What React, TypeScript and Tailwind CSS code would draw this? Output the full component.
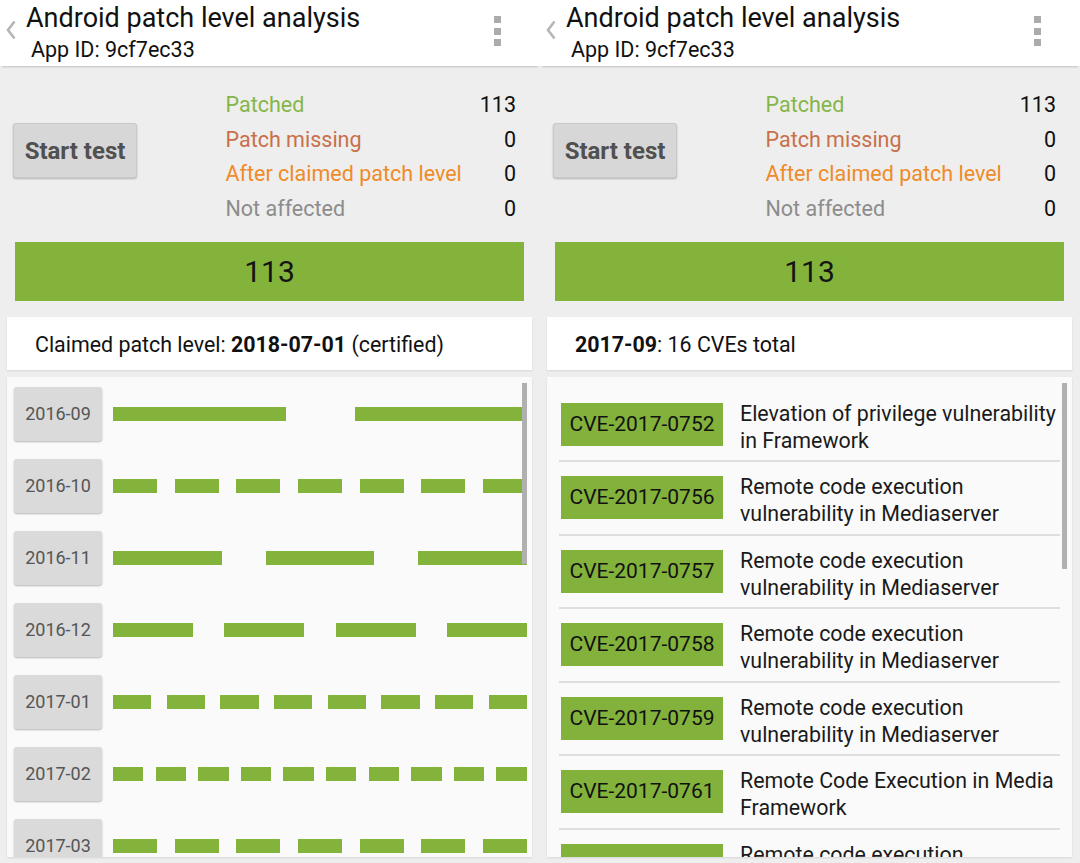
import React from "react";

type DateRow = { month: string; count: number };
type Cve = { id: string; text: string };

const months: DateRow[] = [
  { month: "2016-09", count: 2 },
  { month: "2016-10", count: 7 },
  { month: "2016-11", count: 3 },
  { month: "2016-12", count: 4 },
  { month: "2017-01", count: 8 },
  { month: "2017-02", count: 10 },
  { month: "2017-03", count: 7 },
  { month: "2017-04", count: 9 },
];

const cves: Cve[] = [
  { id: "CVE-2017-0752", text: "Elevation of privilege vulnerability in Framework" },
  { id: "CVE-2017-0756", text: "Remote code execution vulnerability in Mediaserver" },
  { id: "CVE-2017-0757", text: "Remote code execution vulnerability in Mediaserver" },
  { id: "CVE-2017-0758", text: "Remote code execution vulnerability in Mediaserver" },
  { id: "CVE-2017-0759", text: "Remote code execution vulnerability in Mediaserver" },
  { id: "CVE-2017-0761", text: "Remote Code Execution in Media Framework" },
  { id: "CVE-2017-0760", text: "Remote code execution vulnerability in Mediaserver" },
];

export default function App() {
  return (
    <div className="flex h-[863px] w-[1080px] overflow-hidden bg-[#eeeeee] font-['Roboto',sans-serif] text-[#111]">
      <Panel
        info={
          <>
            Claimed patch level: <b>2018-07-01</b> (certified)
          </>
        }
      >
        <MonthList />
      </Panel>
      <Panel
        info={
          <>
            <b>2017-09</b>: 16 CVEs total
          </>
        }
      >
        <CveList />
      </Panel>
    </div>
  );
}

function Panel({ info, children }: { info: React.ReactNode; children: React.ReactNode }) {
  return (
    <div className="flex h-full w-[540px] shrink-0 flex-col">
      {/* --- action bar --- */}
      <header className="relative z-10 flex h-[66px] shrink-0 bg-white shadow-[0_3px_2px_-2px_rgba(0,0,0,0.2)]">
        <svg width="10" height="20" viewBox="0 0 10 20" className="ml-[6px] mt-[20px] shrink-0">
          <polyline points="8.5,1.5 2,10 8.5,18.5" fill="none" stroke="#b5b5b5" strokeWidth="2.6" />
        </svg>
        <div className="ml-[10px] pt-[1.5px]">
          <div className="text-[27px] leading-[32px]">Android patch level analysis</div>
          <div className="ml-[5px] mt-[4px] text-[21.5px] leading-[24px]">App ID: 9cf7ec33</div>
        </div>
        <div className="ml-auto mr-[39px] mt-[16px] flex flex-col gap-[4.5px]">
          <span className="h-[7px] w-[7px] bg-[#ababab]" />
          <span className="h-[7px] w-[7px] bg-[#ababab]" />
          <span className="h-[7px] w-[7px] bg-[#ababab]" />
        </div>
      </header>

      {/* --- summary --- */}
      <div className="flex items-start pt-[22px]">
        <button className="ml-[13px] mt-[35px] h-[55px] w-[124px] rounded-[3px] border border-[#c9c9c9] bg-[#d7d7d7] text-[24px] font-bold text-[#505050] shadow-[0_1px_2px_rgba(0,0,0,0.25)]">
          Start test
        </button>
        <div className="ml-[88.5px] w-[290.5px] text-[21.5px] leading-[34.67px]">
          <StatRow label="Patched" value={113} color="text-[#85b649]" />
          <StatRow label="Patch missing" value={0} color="text-[#c8704a]" />
          <StatRow label="After claimed patch level" value={0} color="text-[#ef8b29]" />
          <StatRow label="Not affected" value={0} color="text-[#8c8c8c]" />
        </div>
      </div>

      <div className="ml-[15px] mr-[16px] mt-[15.5px] flex h-[59px] shrink-0 items-center justify-center bg-[#84b33b] text-[30px] text-[#141414]">
        113
      </div>

      <div className="ml-[7px] mr-[8px] mt-[15.5px] flex h-[53px] shrink-0 items-center bg-white pl-[28px] pt-[3px] text-[21.4px] shadow-[0_1px_2px_rgba(0,0,0,0.1)]">
        <span>{info}</span>
      </div>

      <div className="relative mb-[6px] ml-[7px] mr-[8px] mt-[7px] flex-1 overflow-hidden bg-[#fafafa] shadow-[0_1px_2px_rgba(0,0,0,0.1)]">
        {children}
      </div>
    </div>
  );
}

function StatRow({ label, value, color }: { label: string; value: number; color: string }) {
  return (
    <div className="flex justify-between">
      <span className={color}>{label}</span>
      <span>{value}</span>
    </div>
  );
}

function MonthList() {
  return (
    <>
      <div className="flex flex-col gap-[18px] pl-[7px] pr-[5px] pt-[10px]">
        {months.map((m) => (
          <div key={m.month} className="flex h-[54px] items-center">
            <div className="flex h-[54px] w-[88px] shrink-0 items-center justify-center rounded-[3px] bg-[#dadada] text-[18px] text-[#555] shadow-[0_1px_2px_rgba(0,0,0,0.28)]">
              {m.month}
            </div>
            <Dashes count={m.count} />
          </div>
        ))}
      </div>
      <div className="absolute right-[5px] top-[6px] h-[181px] w-[5px] bg-[#b0b0b0]" />
    </>
  );
}

// one dash per patched CVE, gaps are 2/5 of a dash
function Dashes({ count }: { count: number }) {
  const parts: React.ReactNode[] = [];
  for (let i = 0; i < count; i++) {
    if (i > 0) parts.push(<span key={"g" + i} className="grow-[2] basis-0" />);
    parts.push(<span key={"d" + i} className="h-[14px] grow-[5] basis-0 bg-[#84b33b]" />);
  }
  return <div className="ml-[11px] flex flex-1 items-center">{parts}</div>;
}

function CveList() {
  return (
    <>
      <div className="flex flex-col px-[12px] pt-[12px]">
        {cves.map((c) => (
          <div key={c.id} className="border-b-2 border-[#dedede]">
            <div className="flex h-[71.5px] items-center">
              <div className="ml-[2px] flex h-[43px] w-[162px] shrink-0 items-center justify-center bg-[#82b23c] text-[21px] text-[#111]">
                {c.id}
              </div>
              <div className="ml-[17px] mt-[5px] w-[328px] shrink-0 text-[21.4px] leading-[27px] text-[#1a1a1a]">
                {c.text}
              </div>
            </div>
          </div>
        ))}
      </div>
      <div className="absolute right-[5px] top-[6px] h-[186px] w-[5px] bg-[#b0b0b0]" />
    </>
  );
}
